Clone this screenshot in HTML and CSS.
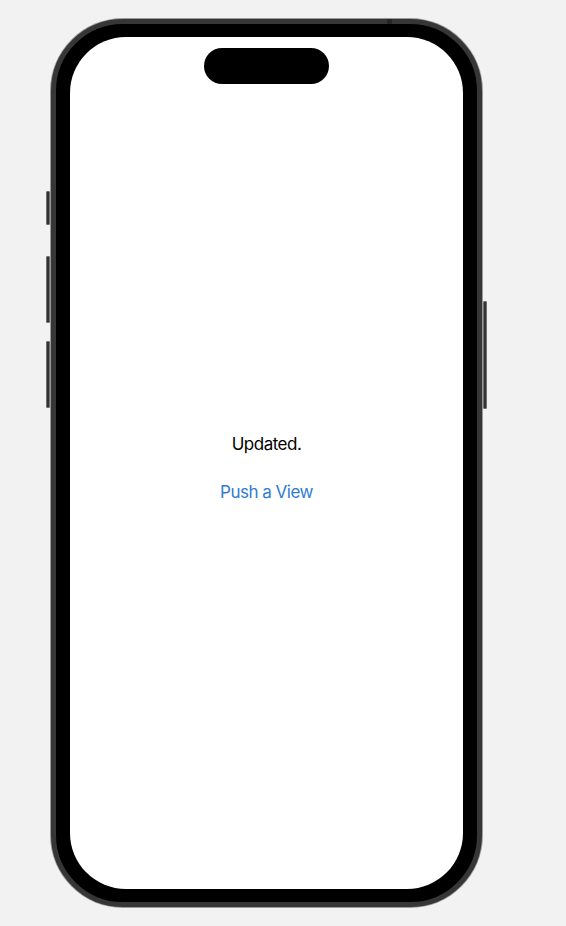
FILE: index.html
```html
<!DOCTYPE html>
<html lang="en">
<head>
<meta charset="utf-8">
<title>Phone preview</title>
<link rel="stylesheet" href="styles.css">
</head>
<body>
<div class="stage">
  <div class="phone">
    <span class="btn btn-action"></span>
    <span class="btn btn-vol-up"></span>
    <span class="btn btn-vol-down"></span>
    <span class="btn btn-power"></span>
    <span class="antenna"></span>
    <div class="screen">
      <div class="island"></div>
      <div class="content">
        <p class="label">Updated.</p>
        <a class="link" href="#">Push a View</a>
      </div>
    </div>
  </div>
</div>
</body>
</html>
```
FILE: styles.css
```css
html, body {
  margin: 0;
  padding: 0;
  background: #f2f2f2;
}
body {
  width: 566px;
  height: 926px;
  overflow: hidden;
  font-family: Inter, "Liberation Sans", sans-serif;
}
.stage {
  padding: 19px 0 0 51px;
}
.phone {
  position: relative;
  box-sizing: border-box;
  width: 431px;
  height: 888px;
  padding: 13px 14px;
  background: #000;
  border: 5px solid #363636;
  border-radius: 72px;
  box-shadow: 0 0 0 1px #9a9a9a;
}
.btn {
  position: absolute;
  width: 4px;
  background: #333;
  border: 1px solid #6f6f6f;
  box-sizing: border-box;
  border-radius: 1px;
}
.btn-action { left: -10px; top: 167px; height: 34px; }
.btn-vol-up { left: -10px; top: 232px; height: 67px; }
.btn-vol-down { left: -10px; top: 317px; height: 67px; }
.btn-power { right: -10px; top: 277px; height: 108px; }
.antenna {
  position: absolute;
  top: -5px;
  left: 331px;
  width: 5px;
  height: 5px;
  background: #262626;
}
.screen {
  position: relative;
  width: 393px;
  height: 852px;
  background: #fff;
  border-radius: 56px;
  overflow: hidden;
}
.island {
  position: absolute;
  left: 134px;
  top: 11px;
  width: 125px;
  height: 36px;
  background: #000;
  border-radius: 18px;
}
.content {
  display: flex;
  flex-direction: column;
  align-items: center;
  gap: 26px;
  padding-top: 396px;
}
.label {
  margin: 0;
  font-size: 17px;
  line-height: 22px;
  letter-spacing: -0.5px;
  color: #000;
}
.link {
  font-size: 17px;
  line-height: 22px;
  letter-spacing: -0.5px;
  color: #2f7cd0;
  text-decoration: none;
}
```
